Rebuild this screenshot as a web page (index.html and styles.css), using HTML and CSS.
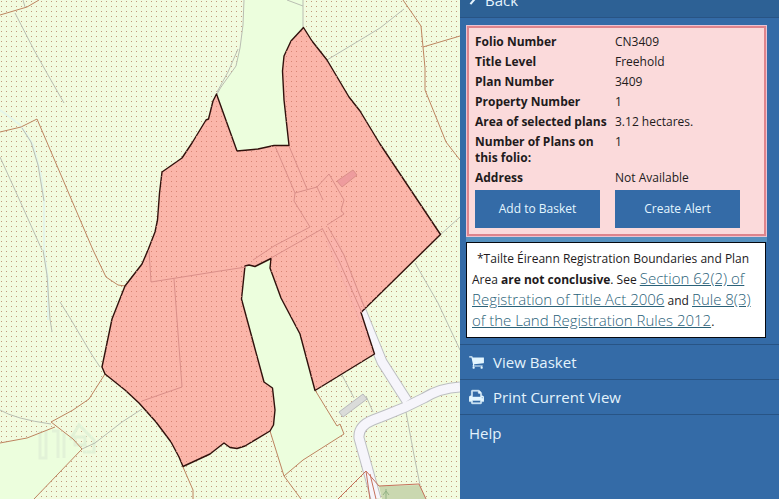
FILE: index.html
```
<!DOCTYPE html>
<html lang="en">
<head>
  <meta charset="UTF-8" />
  <meta name="viewport" content="width=device-width, initial-scale=1" />
  <title>Folio CN3409</title>
  <link rel="stylesheet" href="styles.css">
</head>
<body>

  <main class="map">
    <svg class="map-canvas" viewBox="0 0 460 499" preserveAspectRatio="xMinYMin slice" role="img" aria-label="Map of folio CN3409">
      <defs>
        <pattern id="dots" width="5" height="5" patternUnits="userSpaceOnUse">
          <rect x="1" y="1" width="1" height="1" />
        </pattern>
        <pattern id="dots-selected" width="5" height="5" patternUnits="userSpaceOnUse">
          <rect x="1" y="1" width="1" height="1" />
        </pattern>
      </defs>

      <rect class="land" width="460" height="499" />
      <rect class="dots" width="460" height="499" />

      <!-- unregistered parcels -->
      <g class="open-land">
        <path d="M244 0L243 25L240 48L235 68L220 90L217 94L237 151L258 149L274 146L289 146L282 70L303 28V0Z" />
        <path d="M271 259L245 266L241 299L264 382L275 410L270 431L284 476L303 460L344 434L340 424L337 426L315 390L300 334Z" />
        <path d="M0 443L27 438L55 427L73 439L82 449L34 499H0Z" />
      </g>

      <path class="watermark" d="M40 431V458H46V431M52 431H58V458M64 433V458M70 440L79 425L94 440V452H83M75 437H85V445H75Z" />

      <!-- streams -->
      <g class="stream">
        <path d="M0 110L19 124L25 132L33 145L41 175L44 201V250L48 280L48 320" />
      </g>

      <!-- roads -->
      <path class="road-edge" d="M332 240L362 313L382 362L407 401M460 387Q440 388 424 398Q405 408 386 415L373 420Q358 426 359 438L376 499" />
      <path class="road" d="M332 240L362 313L382 362L407 401M460 387Q440 388 424 398Q405 408 386 415L373 420Q358 426 359 438L376 499" />
      <path class="wood" d="M379 486L420 485L426 499H382Z" />
      <path class="tree" d="M386 489V499M383 495L386 491L389 495" />

      <!-- field edges -->
      <g class="field">
        <path d="M23 0L25 7" />
        <path d="M15 13L34 50L48 75L64 103" />
        <path d="M22 128L31 142L38 165L44 201" />
        <path d="M0 157L15 190L42 250" />
        <path d="M43 250L47 275L50 319L52 332" />
        <path d="M60 302L70 318L92 355L100 367" />
        <path d="M0 410Q15 419 51 424" />
        <path d="M82 449L95 443L122 422L142 409" />
        <path d="M244 0L243 25L240 48L236 66L221 87L217 94" />
        <path d="M238 49L228 72L217 92M287 0L303 6M303 0V28" />
        <path d="M327 60L380 28L404 9" />
        <path d="M440 235L460 217" />
        <path d="M415 263L438 303L460 350" />
        <path d="M342 375L354 398M366 396L373 412" />
        <path d="M406 412L414 455L420 485" />
      </g>

      <!-- registered boundaries -->
      <g class="boundary">
        <path d="M0 15L27 7L39 0" />
        <path d="M0 132L21 127L37 119L93 250L106 277L118 285L125 286" />
        <path d="M105 374L89 399L73 410L51 422L73 439L82 449L34 499M0 443L27 438L55 427" />
        <path d="M183 467L193 490V499" />
        <path d="M403 0L421 26L425 68L425 90L438 122L446 142L460 160M423 47L460 36" />
        <path d="M315 390L337 426L340 424L344 434L303 460L284 476L270 431M284 476L301 499" />
        <path class="boundary-red" d="M338 499L366 471L379 486L419 484L426 499M366 471L370 499M370 474L376 499" />
      </g>

      <path class="building" d="M339 412L363 394L367 399L343 417Z" />

      <!-- selected folio -->
      <g class="selected">
        <path id="folio-shape" d="M216.500 94L237 151L258 149L274 145.500H289L284 100L282.500 71L284 56L291 41L303.500 27.500L312 41L327 60L349 97L360 111L380 144L440.500 234.500L361 312.500L374.500 354L315 390.500L300 334L281 298L270 268L271 258.500L255 266.500L249 265L245 266L241.500 299L264 382L272.500 388L275 410L273.500 425L270 431L245 446L237 448.500L230 447.500L224 443L210 454L183 466.500L179 457L171 442L156 422L139 403L125 390L105 374L102 367L112 319L125 286L142 264L148 250L155 232L157.500 220L159.500 193L162 172L182 158L192 143L206 120L208.500 119L213 101Z" />
        <path class="selected-dots" d="M216.500 94L237 151L258 149L274 145.500H289L284 100L282.500 71L284 56L291 41L303.500 27.500L312 41L327 60L349 97L360 111L380 144L440.500 234.500L361 312.500L374.500 354L315 390.500L300 334L281 298L270 268L271 258.500L255 266.500L249 265L245 266L241.500 299L264 382L272.500 388L275 410L273.500 425L270 431L245 446L237 448.500L230 447.500L224 443L210 454L183 466.500L179 457L171 442L156 422L139 403L125 390L105 374L102 367L112 319L125 286L142 264L148 250L155 232L157.500 220L159.500 193L162 172L182 158L192 143L206 120L208.500 119L213 101Z" />
      </g>
      <g class="inner">
        <path d="M149 250L151 282L220 271L246 267M174 279L182 387L142 401" />
        <path d="M275 146L295 193L294 201L310 227M289 146L307 189" />
        <path d="M295 193L317 187L329 174L344 200L341 210L344 214L327 225M317 187L323 200" />
        <path d="M253 260L274 246L310 227M271 258L322 229" />
        <path d="M322 228L339 261L362 313M328 227L344 255L365 309" />
        <path class="inner-building" d="M337 181L353 170L357 175L342 187Z" />
      </g>
    </svg>
  </main>

  <aside class="sidebar">
    <a class="menu-item back" href="#back">
      <svg class="chevron" viewBox="0 0 10 16" aria-hidden="true"><path d="M2 2L7 8L2 14" /></svg>
      Back
    </a>

    <div class="details">
      <section class="folio">
        <table class="folio-table">
          <tr><th scope="row">Folio Number</th><td>CN3409</td></tr>
          <tr><th scope="row">Title Level</th><td>Freehold</td></tr>
          <tr><th scope="row">Plan Number</th><td>3409</td></tr>
          <tr><th scope="row">Property Number</th><td>1</td></tr>
          <tr><th scope="row">Area of selected plans</th><td>3.12 hectares.</td></tr>
          <tr><th scope="row">Number of Plans on<br>this folio:</th><td>1</td></tr>
          <tr><th scope="row">Address</th><td>Not Available</td></tr>
        </table>
        <div class="folio-actions">
          <button type="button">Add to Basket</button>
          <button type="button">Create Alert</button>
        </div>
      </section>

      <p class="note">*Tailte Éireann Registration Boundaries and Plan Area <strong>are not conclusive</strong>. See <a href="#section-62">Section 62(2) of Registration of Title Act 2006</a> and <a href="#rule-8">Rule 8(3) of the Land Registration Rules 2012</a>.</p>
    </div>

    <nav class="menu">
      <a class="menu-item" href="#basket">
        <svg class="icon" viewBox="0 0 1664 1792" aria-hidden="true"><path d="M640 1536q0 52-38 90t-90 38-90-38-38-90 38-90 90-38 90 38 38 90zm896 0q0 52-38 90t-90 38-90-38-38-90 38-90 90-38 90 38 38 90zm128-1088v512q0 24-16.500 42.500t-40.500 21.500l-1044 122q13 60 13 70 0 16-24 64h920q26 0 45 19t19 45-19 45-45 19h-1024q-26 0-45-19t-19-45q0-11 8-31.500t16-36 21.500-40 15.500-29.500l-177-823h-204q-26 0-45-19t-19-45 19-45 45-19h256q16 0 28.500 6.500t19.500 15.500 13 24.500 8 26 5.500 29.500 4.500 26h1201q26 0 45 19t19 45z" /></svg>
        View Basket
      </a>
      <a class="menu-item" href="#print">
        <svg class="icon icon-print" viewBox="0 0 1664 1792" aria-hidden="true"><path d="M384 1536h896v-256h-896v256zm0-640h896v-384h-160q-40 0-68-28t-28-68v-160h-640v640zm1152 64q0-26-19-45t-45-19-45 19-19 45 19 45 45 19 45-19 19-45zm128 0v416q0 13-9.500 22.500t-22.500 9.500h-224v160q0 40-28 68t-68 28h-960q-40 0-68-28t-28-68v-160h-224q-13 0-22.500-9.500t-9.500-22.500v-416q0-79 56.500-135.500t135.500-56.500h64v-544q0-40 28-68t68-28h672q40 0 88 20t76 48l152 152q28 28 48 76t20 88v256h64q79 0 135.500 56.500t56.500 135.500z" /></svg>
        Print Current View
      </a>
      <a class="menu-item" href="#help">Help</a>
    </nav>
  </aside>

</body>
</html>
```

FILE: styles.css
```
* {
  box-sizing: border-box;
}

body {
  margin: 0;
  display: flex;
  height: 100vh;
  overflow: hidden;
  font-family: "Open Sans", "Noto Sans", sans-serif;
  font-size: 12px;
  color: #221a1c;
}

/* Map */
.map {
  flex: 1;
  min-width: 0;
  background: #f2fbdf;
}

.map-canvas {
  display: block;
  width: 100%;
  height: 100%;
}

.map-canvas path {
  fill: none;
}

.land {
  fill: #f2fbdf;
}

.dots {
  fill: url(#dots);
}

#dots rect {
  fill: #c09a7c;
}

#dots-selected rect {
  fill: #d3806f;
}

.map-canvas .open-land path {
  fill: #ecfedd;
}

.map-canvas .watermark {
  stroke: #e2f2d7;
  stroke-width: 3;
}

.stream {
  stroke: #e4f5ea;
  stroke-width: 2;
}

.road-edge {
  stroke: #bcbec2;
  stroke-width: 11;
}

.road {
  stroke: #f6f5fb;
  stroke-width: 9;
}

.map-canvas .wood {
  fill: #cad8b0;
}

.tree {
  stroke: #92b184;
}

.field {
  stroke: #b9beb2;
}

.boundary {
  stroke: #bd8460;
}

.boundary-red {
  stroke: #c5705a;
}

.map-canvas .building {
  fill: #dadbd9;
  stroke: #b8b9bb;
}

.map-canvas .selected path {
  fill: #fcaca3;
  fill-opacity: 0.88;
  stroke: #30110c;
  stroke-width: 1.4;
  stroke-linejoin: round;
}

.map-canvas .selected .selected-dots {
  fill: url(#dots-selected);
  stroke: none;
}

.inner {
  stroke: #da8f89;
}

.map-canvas .inner-building {
  fill: #ee9c9e;
}

/* Sidebar */
.sidebar {
  flex: none;
  width: 319px;
  background: #346ba7;
}

.menu-item {
  display: flex;
  align-items: center;
  gap: 9px;
  height: 35px;
  padding: 0 9px;
  border-bottom: 1px solid #285485;
  color: #e4f3fc;
  font-size: 15px;
  text-decoration: none;
}

.back {
  margin-top: -17px;
  background: #2d6195;
}

.chevron {
  width: 7px;
  height: 12px;
  fill: none;
  stroke: #e4f3fc;
  stroke-width: 3;
}

.icon {
  width: 15px;
  height: 16px;
  fill: #e4f6ff;
}

.icon-print {
  stroke: #e4f6ff;
  stroke-width: 50;
}

.details {
  padding: 7px 12px 6px 6px;
}

.folio {
  padding: 6px 8px 8px;
  border: 1px solid #ecc3d2;
  background: #fbdadb;
  box-shadow: inset 0 0 0 2px #de848c, 0 5px 0 #5590be;
}

.folio-table {
  width: 100%;
  border-collapse: collapse;
  line-height: 16px;
}

.folio-table th,
.folio-table td {
  padding: 2px 0;
  text-align: left;
  vertical-align: top;
}

.folio-table th {
  width: 140px;
  font-weight: 700;
}

.folio-actions {
  display: flex;
  gap: 15px;
  margin-top: 2px;
}

.folio-actions button {
  width: 125px;
  height: 38px;
  padding: 0 0 2px;
  border: 0;
  background: #346ba7;
  color: #e4f6ff;
  font: inherit;
  cursor: pointer;
}

.note {
  margin: 5px 1px 0 0;
  padding: 5px;
  border: 1px solid #05080f;
  background: #fff;
  line-height: 21px;
  text-indent: 5px;
}

.note strong {
  font-weight: 700;
}

.note a {
  color: #2b6279;
  font-size: 15px;
  font-weight: 300;
  line-height: 16px;
}

.menu {
  border-top: 1px solid #285485;
}

.menu-item:last-child {
  border-bottom: 0;
}
```
